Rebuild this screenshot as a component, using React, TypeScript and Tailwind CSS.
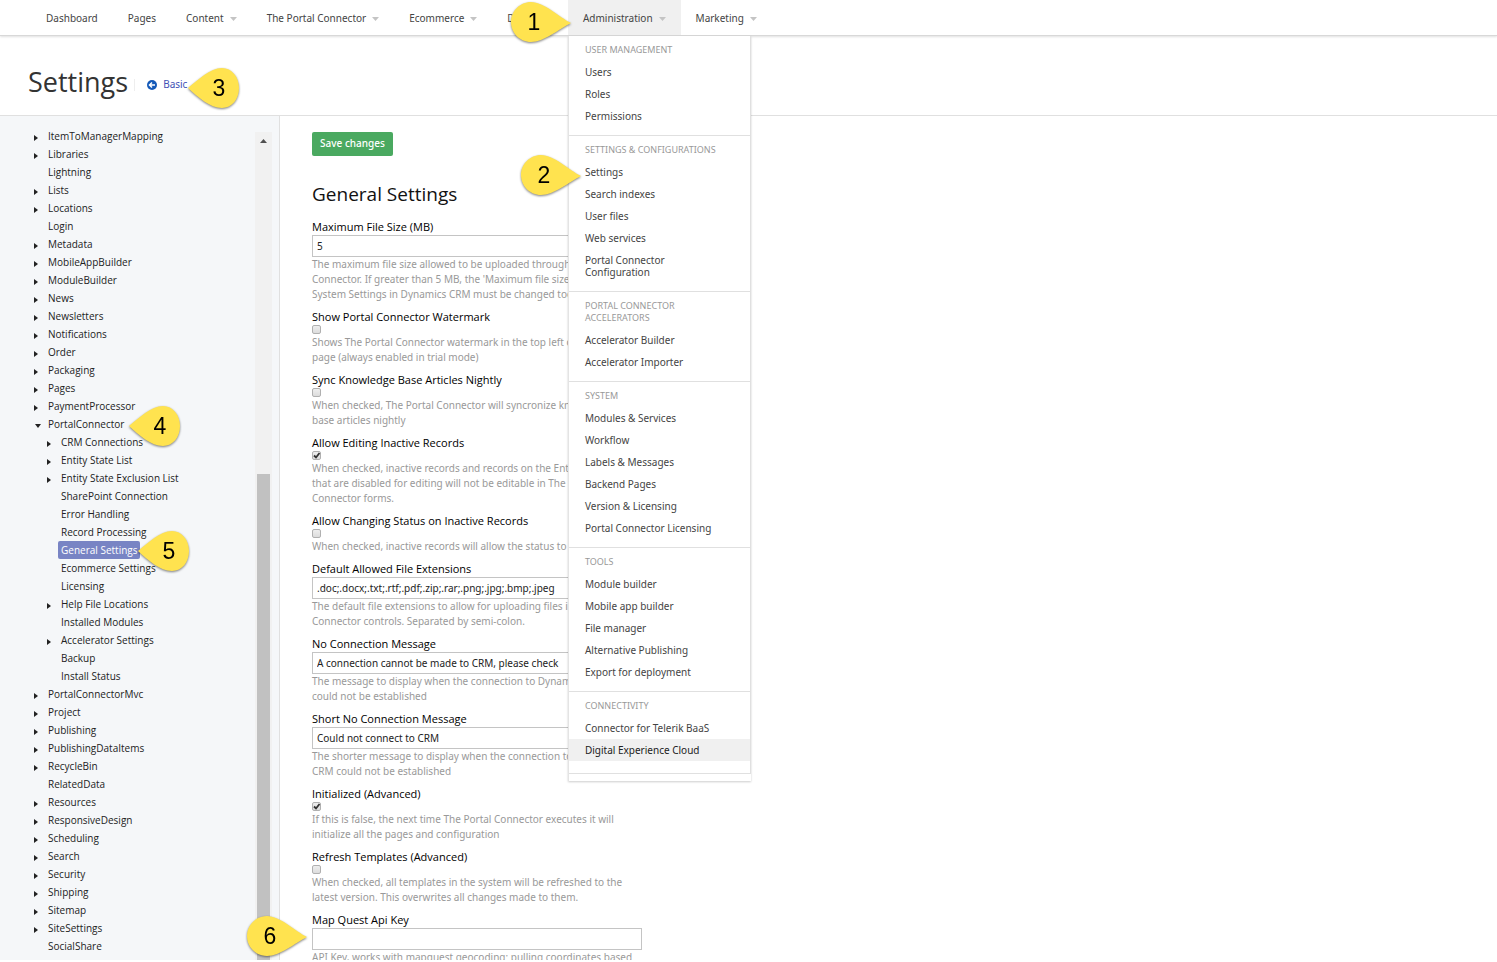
import React from "react";

interface TreeNode {
  name: string;
  level?: number;
  state?: "closed" | "open";
  selected?: boolean;
}

interface Field {
  id: string;
  label: string;
  help: string;
  value?: string;
  checked?: boolean;
}

interface MenuSection {
  title: string;
  items: string[];
}

interface CalloutProps {
  number: number;
  place: string;
  pointsLeft?: boolean;
}

const navItems = [
  { name: "Dashboard" },
  { name: "Pages" },
  { name: "Content", menu: true },
  { name: "The Portal Connector", menu: true },
  { name: "Ecommerce", menu: true },
  { name: "Design", menu: true },
  { name: "Administration", menu: true, open: true },
  { name: "Marketing", menu: true },
];

const menuSections: MenuSection[] = [
  { title: "User management", items: ["Users", "Roles", "Permissions"] },
  {
    title: "Settings & configurations",
    items: [
      "Settings",
      "Search indexes",
      "User files",
      "Web services",
      "Portal Connector Configuration",
    ],
  },
  {
    title: "Portal Connector Accelerators",
    items: ["Accelerator Builder", "Accelerator Importer"],
  },
  {
    title: "System",
    items: [
      "Modules & Services",
      "Workflow",
      "Labels & Messages",
      "Backend Pages",
      "Version & Licensing",
      "Portal Connector Licensing",
    ],
  },
  {
    title: "Tools",
    items: [
      "Module builder",
      "Mobile app builder",
      "File manager",
      "Alternative Publishing",
      "Export for deployment",
    ],
  },
  {
    title: "Connectivity",
    items: ["Connector for Telerik BaaS", "Digital Experience Cloud"],
  },
];

const tree: TreeNode[] = [
  { name: "ItemToManagerMapping", state: "closed" },
  { name: "Libraries", state: "closed" },
  { name: "Lightning" },
  { name: "Lists", state: "closed" },
  { name: "Locations", state: "closed" },
  { name: "Login" },
  { name: "Metadata", state: "closed" },
  { name: "MobileAppBuilder", state: "closed" },
  { name: "ModuleBuilder", state: "closed" },
  { name: "News", state: "closed" },
  { name: "Newsletters", state: "closed" },
  { name: "Notifications", state: "closed" },
  { name: "Order", state: "closed" },
  { name: "Packaging", state: "closed" },
  { name: "Pages", state: "closed" },
  { name: "PaymentProcessor", state: "closed" },
  { name: "PortalConnector", state: "open" },
  { name: "CRM Connections", level: 1, state: "closed" },
  { name: "Entity State List", level: 1, state: "closed" },
  { name: "Entity State Exclusion List", level: 1, state: "closed" },
  { name: "SharePoint Connection", level: 1 },
  { name: "Error Handling", level: 1 },
  { name: "Record Processing", level: 1 },
  { name: "General Settings", level: 1, selected: true },
  { name: "Ecommerce Settings", level: 1 },
  { name: "Licensing", level: 1 },
  { name: "Help File Locations", level: 1, state: "closed" },
  { name: "Installed Modules", level: 1 },
  { name: "Accelerator Settings", level: 1, state: "closed" },
  { name: "Backup", level: 1 },
  { name: "Install Status", level: 1 },
  { name: "PortalConnectorMvc", state: "closed" },
  { name: "Project", state: "closed" },
  { name: "Publishing", state: "closed" },
  { name: "PublishingDataItems", state: "closed" },
  { name: "RecycleBin", state: "closed" },
  { name: "RelatedData" },
  { name: "Resources", state: "closed" },
  { name: "ResponsiveDesign", state: "closed" },
  { name: "Scheduling", state: "closed" },
  { name: "Search", state: "closed" },
  { name: "Security", state: "closed" },
  { name: "Shipping", state: "closed" },
  { name: "Sitemap", state: "closed" },
  { name: "SiteSettings", state: "closed" },
  { name: "SocialShare" },
];

const fields: Field[] = [
  {
    id: "max-file-size",
    label: "Maximum File Size (MB)",
    value: "5",
    help: "The maximum file size allowed to be uploaded through Portal\nConnector. If greater than 5 MB, the 'Maximum file size' in the\nSystem Settings in Dynamics CRM must be changed too.",
  },
  {
    id: "watermark",
    label: "Show Portal Connector Watermark",
    checked: false,
    help: "Shows The Portal Connector watermark in the top left of the\npage (always enabled in trial mode)",
  },
  {
    id: "sync-articles",
    label: "Sync Knowledge Base Articles Nightly",
    checked: false,
    help: "When checked, The Portal Connector will syncronize knowledge\nbase articles nightly",
  },
  {
    id: "edit-inactive",
    label: "Allow Editing Inactive Records",
    checked: true,
    help: "When checked, inactive records and records on the Entity\nthat are disabled for editing will not be editable in The Portal\nConnector forms.",
  },
  {
    id: "status-inactive",
    label: "Allow Changing Status on Inactive Records",
    checked: false,
    help: "When checked, inactive records will allow the status to change",
  },
  {
    id: "extensions",
    label: "Default Allowed File Extensions",
    value: ".doc;.docx;.txt;.rtf;.pdf;.zip;.rar;.png;.jpg;.bmp;.jpeg",
    help: "The default file extensions to allow for uploading files in\nConnector controls. Separated by semi-colon.",
  },
  {
    id: "no-connection",
    label: "No Connection Message",
    value: "A connection cannot be made to CRM, please check",
    help: "The message to display when the connection to Dynamics\ncould not be established",
  },
  {
    id: "short-no-connection",
    label: "Short No Connection Message",
    value: "Could not connect to CRM",
    help: "The shorter message to display when the connection to\nCRM could not be established",
  },
  {
    id: "initialized",
    label: "Initialized (Advanced)",
    checked: true,
    help: "If this is false, the next time The Portal Connector executes it will\ninitialize all the pages and configuration",
  },
  {
    id: "refresh-templates",
    label: "Refresh Templates (Advanced)",
    checked: false,
    help: "When checked, all templates in the system will be refreshed to the\nlatest version. This overwrites all changes made to them.",
  },
  {
    id: "mapquest-key",
    label: "Map Quest Api Key",
    value: "",
    help: "API Key, works with mapquest geocoding; pulling coordinates based",
  },
];

const AdministrationMenu: React.FC = () => (
  <div className="absolute left-0 top-full z-10 mt-px w-[183px] border-l border-[#e4e4e4] bg-white pb-[7px] shadow-[0_1px_2px_rgba(0,0,0,0.2)]">
    {menuSections.map((section) => (
      <section
        key={section.title}
        className="border-b border-r border-[#e0e0e0] pb-2 pt-2 last:pb-3"
      >
        <h3 className="mb-[5px] px-4 text-[9px] leading-3 text-[#999] uppercase">
          <span className="block w-[132px]">{section.title}</span>
        </h3>
        {section.items.map((item) => (
          <a
            key={item}
            href="#"
            className={`block py-[5px] pl-4 pr-8 leading-3 ${
              item === "Digital Experience Cloud"
                ? "bg-[#f0f0f0] text-[#222]"
                : "text-[#444]"
            }`}
          >
            {item}
          </a>
        ))}
      </section>
    ))}
  </div>
);

const NavBar: React.FC = () => (
  <nav className="relative z-10 flex h-9 shrink-0 border-b border-[#d8d8d8] bg-white pl-[31px] shadow-[0_1px_2px_rgba(0,0,0,0.12)]">
    {navItems.map((item) => (
      <div key={item.name} className="relative">
        <button
          type="button"
          className={`flex h-full items-center gap-[6px] px-[15px] pt-px whitespace-nowrap text-[#444] ${
            item.open ? "bg-[#f0f0f0]" : ""
          }`}
        >
          {item.name}
          {item.menu && (
            <svg width="7" height="4" viewBox="0 0 7 4" className="mt-[2px]">
              <path d="M0 0h7L3.5 4z" fill="#c4c4c4" />
            </svg>
          )}
        </button>
        {item.open && <AdministrationMenu />}
      </div>
    ))}
  </nav>
);

const Arrow: React.FC<{ state?: "closed" | "open" }> = ({ state }) => (
  <span className="flex w-[14px] shrink-0 pt-1">
    {state === "closed" && (
      <svg width="4" height="6" viewBox="0 0 4 6">
        <path d="M0 0l4 3-4 3z" fill="#222" />
      </svg>
    )}
    {state === "open" && (
      <svg width="8" height="4" viewBox="0 0 8 4">
        <path d="M1 0h6L4 4z" fill="#222" />
      </svg>
    )}
  </span>
);

const Sidebar: React.FC = () => (
  <aside className="flex w-[280px] shrink-0 border-r border-[#e0e0e0] bg-[#f5f7f9]">
    <ul className="min-w-0 flex-1 overflow-hidden pl-[34px] pt-[11px] font-['Open_Sans',sans-serif]">
      {tree.map((node) => (
        <li
          key={node.name}
          className={`flex h-[18px] items-center ${node.level ? "pl-[13px]" : ""}`}
        >
          <Arrow state={node.state} />
          <a
            href="#"
            className={`-ml-[3px] rounded-[2px] px-[3px] leading-[18px] whitespace-nowrap ${
              node.selected ? "bg-[#7884c4] text-white" : "text-[#222]"
            }`}
          >
            {node.name}
          </a>
        </li>
      ))}
    </ul>
    <div className="mr-[7px] mt-4 flex w-[17px] flex-col items-center bg-[#f1f1f1]">
      <svg width="7" height="4" viewBox="0 0 7 4" className="mt-[7px] shrink-0">
        <path d="M0 4h7L3.5 0z" fill="#505050" />
      </svg>
      <div className="mt-[331px] w-[13px] flex-1 bg-[#c1c1c1]" />
    </div>
  </aside>
);

const SettingField: React.FC<{ field: Field }> = ({ field }) => (
  <div className="mb-[7px]">
    <label
      htmlFor={field.id}
      className="block font-['Open_Sans',sans-serif] text-[11px] leading-4 text-black"
    >
      {field.label}
    </label>
    {field.value === undefined ? (
      <div className="flex h-[10px] items-start">
        <input
          id={field.id}
          type="checkbox"
          defaultChecked={field.checked}
          className="peer size-[9px] appearance-none rounded-[2px] border border-[#b0b0b0] bg-linear-to-b from-[#eee] to-[#dcdcdc]"
        />
        <svg
          viewBox="0 0 9 9"
          className="pointer-events-none -ml-[9px] hidden size-[9px] peer-checked:block"
        >
          <path d="M2 4.5l2 2L7.5 2" fill="none" stroke="#333" strokeWidth="1.8" />
        </svg>
      </div>
    ) : (
      <input
        id={field.id}
        type="text"
        defaultValue={field.value}
        className="block h-[22px] w-full border border-[#c4c4c4] bg-white px-1 text-[#222]"
      />
    )}
    <p className="leading-[15px] whitespace-pre text-[#999]">{field.help}</p>
  </div>
);

const Callout: React.FC<CalloutProps> = ({ number, place, pointsLeft }) => (
  <div className={`absolute z-20 ${place}`}>
    <svg
      width={pointsLeft ? 52 : 60}
      height="44"
      viewBox={pointsLeft ? "0 0 52 44" : "0 0 60 44"}
      className="block overflow-visible drop-shadow-[0_1px_1px_rgba(0,0,0,0.5)]"
    >
      <path
        d={
          pointsLeft
            ? "M0 21C10 13 22 1 34 1C44 1 51 10 51 21C51 32 44 41 34 41C22 41 10 30 0 21z"
            : "M60 22C48 16 33 1 20 1C9 1 0 10 0 21C0 32 9 41 20 41C33 41 48 28 60 22z"
        }
        fill="#ffe34f"
      />
      <text
        x={pointsLeft ? 31 : 23}
        y="29"
        textAnchor="middle"
        fontSize="23"
        fill="#000"
        className="font-['Liberation_Sans',Arial,sans-serif]"
      >
        {number}
      </text>
    </svg>
  </div>
);

const App: React.FC = () => {
  return (
    <div className="relative flex h-screen flex-col overflow-hidden bg-white pb-[2px] font-['Noto_Sans','Open_Sans',sans-serif] text-[10px]">
      <NavBar />
      <header className="flex h-20 shrink-0 items-center border-b border-[#e0e0e0] pl-7 pt-3">
        <h1 className="font-['Open_Sans',sans-serif] text-[27px] leading-9 text-[#333]">
          Settings
        </h1>
        <a
          href="#"
          className="ml-[6px] mt-[6px] flex h-3 items-center border-l border-[#eee] pl-3 text-[#3f51b5]"
        >
          <svg width="10" height="10" viewBox="0 0 10 10" className="mr-[6px]">
            <circle cx="5" cy="5" r="5" fill="#1459b8" />
            <path
              d="M8 5H3M5 2.5L2.5 5L5 7.5"
              fill="none"
              stroke="#fff"
              strokeWidth="1.5"
            />
          </svg>
          Basic
        </a>
      </header>
      <div className="flex min-h-0 flex-1">
        <Sidebar />
        <main className="min-w-0 flex-1 overflow-hidden pl-8 pt-4">
          <button
            type="button"
            className="flex h-6 min-w-[81px] items-center justify-center rounded-[2px] bg-[#4aa960] px-2 pb-[2px] font-medium text-white"
          >
            Save changes
          </button>
          <h2 className="mb-3 mt-[25px] font-['Open_Sans',sans-serif] text-[19px] leading-[26px] text-[#111]">
            General Settings
          </h2>
          <form className="w-[330px]">
            {fields.map((field) => (
              <SettingField key={field.id} field={field} />
            ))}
          </form>
        </main>
      </div>
      <Callout number={1} place="left-[511px] top-[1px]" />
      <Callout number={2} place="left-[521px] top-[154px]" />
      <Callout number={3} place="left-[188px] top-[67px]" pointsLeft />
      <Callout number={4} place="left-[129px] top-[405px]" pointsLeft />
      <Callout number={5} place="left-[138px] top-[530px]" pointsLeft />
      <Callout number={6} place="left-[247px] top-[915px]" />
    </div>
  );
};

export default App;
